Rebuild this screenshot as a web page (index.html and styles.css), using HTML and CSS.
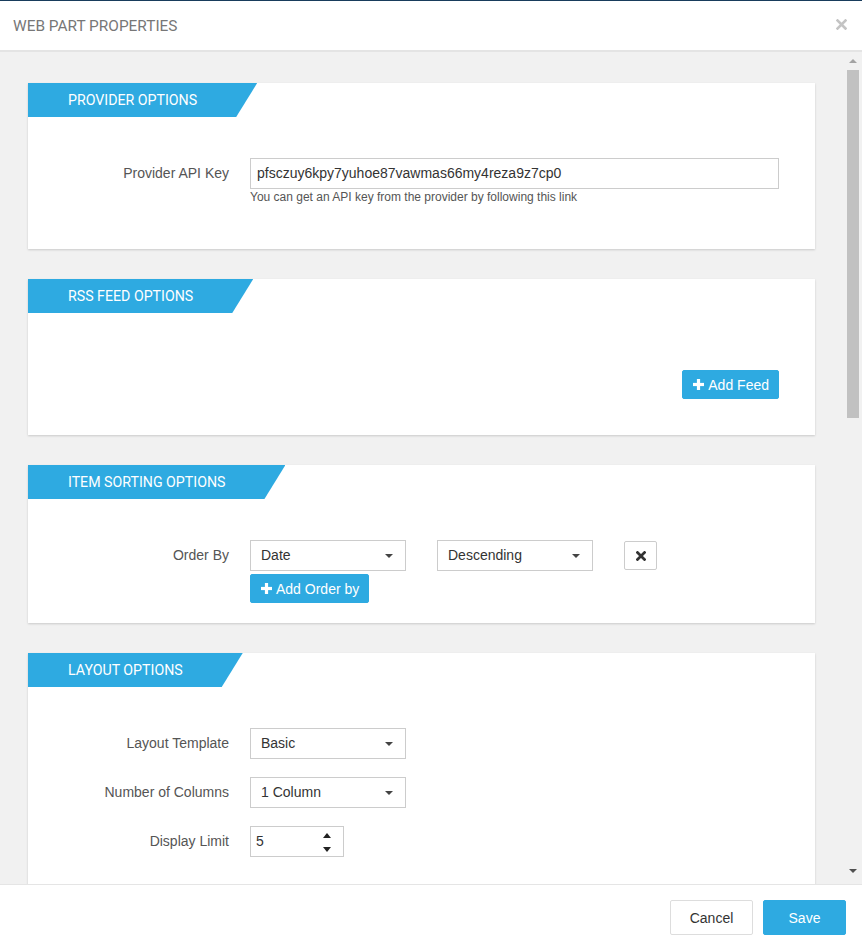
FILE: index.html
```html
<!DOCTYPE html>
<html lang="en">
<head>
<meta charset="utf-8">
<title>Web Part Properties</title>
<link rel="stylesheet" href="styles.css">
</head>
<body>
<div class="modal">
  <header class="modal-header">
    <h1 class="modal-title">WEB PART PROPERTIES</h1>
    <svg class="close-icon" width="11" height="11" viewBox="0 0 11 11"><path d="M1.5 1.5 L9.5 9.5 M9.5 1.5 L1.5 9.5" stroke="#c4c4c4" stroke-width="2.6" stroke-linecap="square"/></svg>
  </header>

  <div class="modal-body">
    <div class="scroll-content">

      <section class="card">
        <div class="tab">Provider Options</div>
        <div class="card-body body-provider">
          <div class="form-row">
            <label class="form-label">Provider API Key</label>
            <div class="form-control-col">
              <div class="text-input wide">pfsczuy6kpy7yuhoe87vawmas66my4reza9z7cp0</div>
              <div class="help-text">You can get an API key from the provider by following this link</div>
            </div>
          </div>
        </div>
      </section>

      <section class="card">
        <div class="tab">RSS Feed Options</div>
        <div class="card-body body-rss">
          <button class="btn btn-primary btn-sm">
            <svg class="plus" width="11" height="11" viewBox="0 0 11 11"><rect x="3.9" y="0" width="3.2" height="11" fill="#fff"/><rect x="0" y="3.9" width="11" height="3.2" fill="#fff"/></svg>Add Feed
          </button>
        </div>
      </section>

      <section class="card">
        <div class="tab">Item Sorting Options</div>
        <div class="card-body body-sort">
          <div class="form-row">
            <label class="form-label">Order By</label>
            <div class="form-control-col">
              <div class="inline-controls">
                <div class="select">Date<span class="caret"></span></div>
                <div class="select">Descending<span class="caret"></span></div>
                <button class="btn btn-icon">
                  <svg width="10" height="10" viewBox="0 0 10 10"><path d="M1.5 1.5 L8.5 8.5 M8.5 1.5 L1.5 8.5" stroke="#333" stroke-width="2.7" stroke-linecap="square"/></svg>
                </button>
              </div>
              <button class="btn btn-primary btn-sm btn-order">
                <svg class="plus" width="11" height="11" viewBox="0 0 11 11"><rect x="3.9" y="0" width="3.2" height="11" fill="#fff"/><rect x="0" y="3.9" width="11" height="3.2" fill="#fff"/></svg>Add Order by
              </button>
            </div>
          </div>
        </div>
      </section>

      <section class="card">
        <div class="tab">Layout Options</div>
        <div class="card-body body-layout">
          <div class="form-row">
            <label class="form-label">Layout Template</label>
            <div class="form-control-col"><div class="select">Basic<span class="caret"></span></div></div>
          </div>
          <div class="form-row">
            <label class="form-label">Number of Columns</label>
            <div class="form-control-col"><div class="select">1 Column<span class="caret"></span></div></div>
          </div>
          <div class="form-row">
            <label class="form-label">Display Limit</label>
            <div class="form-control-col">
              <div class="number-input">5<span class="spinner"><span class="spin-up"></span><span class="spin-down"></span></span></div>
            </div>
          </div>
        </div>
      </section>

    </div>
    <div class="scrollbar">
      <div class="sb-arrow"><span class="sb-up"></span></div>
      <div class="sb-thumb"></div>
      <div class="sb-track"></div>
      <div class="sb-arrow sb-arrow-bottom"><span class="sb-down"></span></div>
    </div>
  </div>

  <footer class="modal-footer">
    <button class="btn btn-default btn-lg">Cancel</button>
    <button class="btn btn-primary btn-lg">Save</button>
  </footer>
</div>
</body>
</html>
```

FILE: styles.css
```css
* { box-sizing: border-box; }

html, body {
  margin: 0;
  padding: 0;
  background: #fff;
}

body {
  font-family: "Liberation Sans", Arial, sans-serif;
  font-size: 14px;
  color: #333;
}

.modal {
  width: 862px;
  height: 950px;
  display: flex;
  flex-direction: column;
  overflow: hidden;
}

.modal-header {
  flex: 0 0 auto;
  height: 52px;
  border-top: 1px solid #183c5c;
  border-bottom: 2px solid #e4e4e4;
  display: flex;
  align-items: center;
  justify-content: space-between;
  padding: 0 15px 0 13px;
  background: #fff;
}

.modal-title {
  margin: 0;
  font-family: Roboto, "Liberation Sans", sans-serif;
  font-weight: 400;
  font-size: 15.4px;
  color: #777;
  letter-spacing: 0;
}

.close-icon { display: block; margin-top: -2px; }

.modal-body {
  flex: 1 1 auto;
  display: flex;
  background: #f1f1f1;
  overflow: hidden;
  min-height: 0;
}

.scroll-content {
  flex: 1 1 auto;
  padding: 31px 31px 0 28px;
  display: flex;
  flex-direction: column;
  gap: 30px;
  overflow: hidden;
}

.card {
  flex: 0 0 auto;
  background: #fff;
  box-shadow: 0 1px 2px rgba(0, 0, 0, 0.16);
}

.tab {
  display: inline-block;
  height: 34px;
  line-height: 34px;
  padding: 0 60px 0 40px;
  background: #2eaae1;
  color: #fff;
  font-family: Roboto, "Liberation Sans", sans-serif;
  font-size: 14.2px;
  text-transform: uppercase;
  clip-path: polygon(0 0, 100% 0, calc(100% - 21px) 100%, 0 100%);
  vertical-align: top;
}

.card-body { padding-right: 36px; }

.body-provider { padding-top: 41px; padding-bottom: 44px; }
.body-rss { padding-top: 57px; padding-bottom: 36px; display: flex; justify-content: flex-end; }
.body-sort { padding-top: 41px; padding-bottom: 20px; }
.body-layout { padding-top: 41px; padding-bottom: 60px; display: flex; flex-direction: column; gap: 18px; }

.form-row {
  display: flex;
  align-items: flex-start;
}

.form-label {
  flex: 0 0 222px;
  padding-right: 21px;
  text-align: right;
  color: #555;
  line-height: 31px;
  height: 31px;
}

.form-control-col {
  flex: 1 1 auto;
  display: flex;
  flex-direction: column;
  align-items: flex-start;
}

.text-input {
  height: 31px;
  line-height: 29px;
  border: 1px solid #ccc;
  padding: 0 6px;
  color: #333;
  background: #fff;
}
.text-input.wide { width: 529px; }

.help-text {
  font-size: 12px;
  line-height: 15px;
  color: #555;
  margin-top: 1px;
}

.inline-controls {
  display: flex;
  align-items: center;
  gap: 31px;
}

.select {
  position: relative;
  width: 156px;
  height: 31px;
  line-height: 29px;
  border: 1px solid #ccc;
  padding: 0 10px;
  color: #333;
  background: #fff;
}

.caret {
  position: absolute;
  right: 12px;
  top: 13px;
  width: 0;
  height: 0;
  border-left: 4px solid transparent;
  border-right: 4px solid transparent;
  border-top: 4px solid #444;
}

.number-input {
  position: relative;
  width: 94px;
  height: 31px;
  line-height: 29px;
  border: 1px solid #ccc;
  padding: 0 5px;
  color: #333;
  background: #fff;
}

.spinner {
  position: absolute;
  right: 0;
  top: 0;
  width: 30px;
  height: 29px;
}
.spin-up, .spin-down {
  position: absolute;
  left: 10px;
  width: 0;
  height: 0;
  border-left: 4.5px solid transparent;
  border-right: 4.5px solid transparent;
}
.spin-up { top: 6px; border-bottom: 5px solid #222; }
.spin-down { top: 20px; border-top: 5px solid #222; }

.btn {
  font-family: "Liberation Sans", Arial, sans-serif;
  font-size: 14px;
  border: 1px solid transparent;
  border-radius: 2px;
  cursor: pointer;
  display: inline-flex;
  align-items: center;
  justify-content: center;
  margin: 0;
}

.btn-primary {
  background: #2eaae1;
  border-color: #2eaae1;
  color: #fff;
}

.btn-sm {
  height: 29px;
  padding: 0 9px 0 10px;
}

.plus { margin-right: 4px; display: block; }

.btn-order { margin-top: 3px; }

.btn-icon {
  width: 33px;
  height: 29px;
  background: #fff;
  border: 1px solid #ccc;
  padding: 0;
}

.modal-footer {
  flex: 0 0 auto;
  height: 66px;
  border-top: 1px solid #e5e5e5;
  background: #fff;
  display: flex;
  justify-content: flex-end;
  align-items: flex-start;
  gap: 10px;
  padding: 15px 16px 0 0;
}

.btn-lg {
  width: 83px;
  height: 35px;
}

.btn-default {
  background: #fff;
  border: 1px solid #ddd;
  color: #333;
}

.scrollbar {
  flex: 0 0 16px;
  display: flex;
  flex-direction: column;
  background: #f1f1f1;
}

.sb-arrow {
  flex: 0 0 18px;
  display: flex;
  justify-content: center;
  align-items: center;
  padding-right: 2px;
}
.sb-arrow-bottom { flex-basis: 17px; align-items: flex-start; padding-top: 2px; }

.sb-up {
  width: 0; height: 0;
  border-left: 4px solid transparent;
  border-right: 4px solid transparent;
  border-bottom: 4px solid #a3a3a3;
}
.sb-down {
  width: 0; height: 0;
  border-left: 4px solid transparent;
  border-right: 4px solid transparent;
  border-top: 4px solid #505050;
}

.sb-thumb {
  flex: 0 0 348px;
  margin: 0 3px 0 1px;
  background: #c1c1c1;
}
.sb-track { flex: 1 1 auto; }
```
